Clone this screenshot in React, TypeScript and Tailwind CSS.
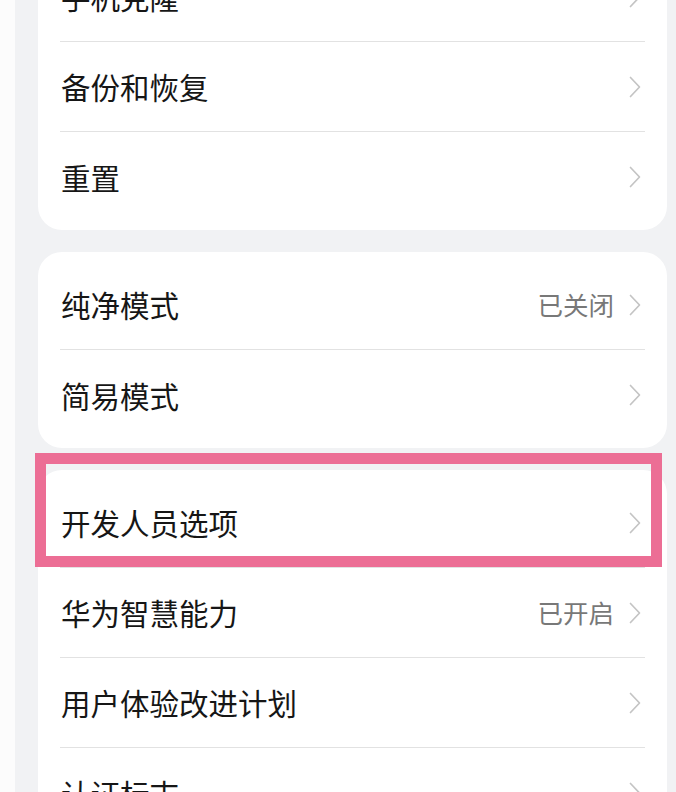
import React from 'react';

type Item = { label: string; value?: string };

const groups: Item[][] = [
  [{ label: '手机克隆' }, { label: '备份和恢复' }, { label: '重置' }],
  [{ label: '纯净模式', value: '已关闭' }, { label: '简易模式' }],
  [
    { label: '开发人员选项' },
    { label: '华为智慧能力', value: '已开启' },
    { label: '用户体验改进计划' },
    { label: '认证标志' },
  ],
];

function Chevron() {
  return (
    <svg width="14" height="22" viewBox="0 0 14 22" fill="none" className="shrink-0">
      <path d="M2.5 1.5 L11.5 11 L2.5 20.5" stroke="#c4c4c4" strokeWidth="1.7" strokeLinecap="round" strokeLinejoin="round" />
    </svg>
  );
}

function Row({ item, last }: { item: Item; last: boolean }) {
  return (
    <div className="px-[22px]">
      <div className={`h-[90px] flex items-center justify-between ${last ? '' : 'border-b border-[#e2e2e2]'}`}>
        <span className="text-[29.5px] text-[#161616] pl-[1px]">{item.label}</span>
        <div className="flex items-center gap-[14px] pr-[3px]">
          {item.value && <span className="text-[25.5px] text-[#787878]">{item.value}</span>}
          <Chevron />
        </div>
      </div>
    </div>
  );
}

export default function App() {
  return (
    <div
      className="relative w-[676px] h-[792px] overflow-hidden bg-[#f1f2f4] flex"
      style={{ fontFamily: '"Noto Sans CJK SC", "Noto Sans", sans-serif' }}
    >
      <div className="w-[15px] shrink-0 bg-[#fcfcfc]" />
      <div className="flex-1 pl-[23px] pr-[9px] -mt-[56px] flex flex-col gap-[22px]">
        {groups.map((group, gi) => (
          <div key={gi} className="bg-white rounded-[24px] py-[8px]">
            {group.map((item, i) => (
              <Row key={item.label} item={item} last={i === group.length - 1} />
            ))}
          </div>
        ))}
      </div>
      {/* highlight frame */}
      <div className="absolute left-[35px] top-[453px] w-[627px] h-[114px] border-[11px] border-[#ec6e95] pointer-events-none" />
    </div>
  );
}
